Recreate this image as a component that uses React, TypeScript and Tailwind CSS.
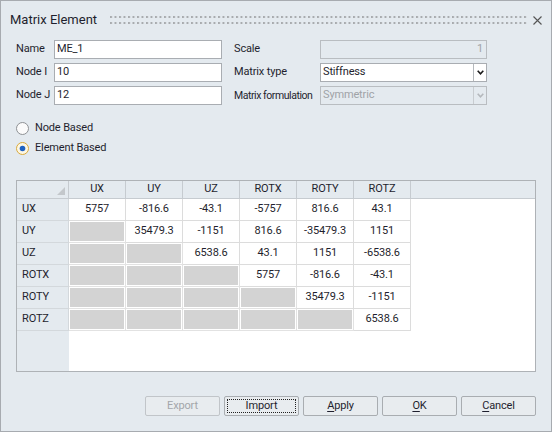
import React from "react";

type Cell = string | null;

const cols = ["UX", "UY", "UZ", "ROTX", "ROTY", "ROTZ"];

const rows: { name: string; cells: Cell[] }[] = [
  { name: "UX", cells: ["5757", "-816.6", "-43.1", "-5757", "816.6", "43.1"] },
  { name: "UY", cells: [null, "35479.3", "-1151", "816.6", "-35479.3", "1151"] },
  { name: "UZ", cells: [null, null, "6538.6", "43.1", "1151", "-6538.6"] },
  { name: "ROTX", cells: [null, null, null, "5757", "-816.6", "-43.1"] },
  { name: "ROTY", cells: [null, null, null, null, "35479.3", "-1151"] },
  { name: "ROTZ", cells: [null, null, null, null, null, "6538.6"] },
];

function Chevron({ disabled }: { disabled?: boolean }) {
  return (
    <svg width="7" height="5" viewBox="0 0 7 5">
      <path
        d="M0.7 0.8 L3.5 3.8 L6.3 0.8"
        fill="none"
        stroke={disabled ? "#b4b8bc" : "#1a1a1a"}
        strokeWidth="1.6"
      />
    </svg>
  );
}

function Radio({ checked, label }: { checked?: boolean; label: string }) {
  return (
    <div className="flex items-center h-[20px] gap-[6px]">
      <svg width="13" height="13" viewBox="0 0 13 13">
        {checked ? (
          <>
            <circle cx="6.5" cy="6.5" r="6" fill="#fdf7e4" stroke="#d8a93c" />
            <circle cx="6.5" cy="6.5" r="2.8" fill="#1f62c2" />
          </>
        ) : (
          <circle cx="6.5" cy="6.5" r="6" fill="#fbfbfb" stroke="#8e9194" />
        )}
      </svg>
      <span>{label}</span>
    </div>
  );
}

function Button({
  children,
  disabled,
  focused,
}: {
  children: React.ReactNode;
  disabled?: boolean;
  focused?: boolean;
}) {
  return (
    <button
      className={`relative w-[75px] h-[20px] rounded-[2px] border bg-[#e8ecef] flex items-center justify-center ${
        disabled ? "border-[#c1c5c9] text-[#a3a6aa]" : "border-[#a9adb1] text-[#1f1f2e]"
      }`}
    >
      {focused && (
        <span className="absolute inset-[2px] border border-dotted border-[#222]" />
      )}
      {children}
    </button>
  );
}

export default function App() {
  return (
    <div className="w-[552px] h-[432px] bg-[#e4eaef] border border-[#a7abb0] font-['Segoe_UI',Roboto,sans-serif] text-[11px] tracking-[-0.15px] text-[#1f1f2e] flex flex-col">
      {/* title bar */}
      <div className="h-[38px] flex items-center pl-[9px] pr-[9px]">
        <span className="text-[13px] tracking-normal">Matrix Element</span>
        <svg className="flex-1 h-[9px] ml-[13px] mr-[6px]">
          <defs>
            <pattern id="dots" width="4.5" height="9" patternUnits="userSpaceOnUse">
              <rect x="0" y="0" width="2" height="2" fill="#a8abae" />
              <rect x="0" y="6" width="2" height="2" fill="#a8abae" />
            </pattern>
          </defs>
          <rect width="100%" height="9" fill="url(#dots)" />
        </svg>
        <svg width="9" height="9" viewBox="0 0 9 9">
          <path d="M0.5 0.5 L8.5 8.5 M8.5 0.5 L0.5 8.5" stroke="#555" strokeWidth="1.1" />
        </svg>
      </div>

      {/* fields */}
      <div className="flex pl-[15px] mt-[1px]">
        <div className="flex flex-col gap-[4px]">
          {[
            ["Name", "ME_1"],
            ["Node I", "10"],
            ["Node J", "12"],
          ].map(([label, value]) => (
            <div key={label} className="flex items-center h-[19px]">
              <span className="w-[38px] whitespace-nowrap">{label}</span>
              <div className="w-[168px] h-full bg-white border border-[#a9adb2] px-[2px] flex items-center">
                {value}
              </div>
            </div>
          ))}
        </div>
        <div className="flex flex-col gap-[4px] ml-[12px]">
          <div className="flex items-center h-[19px]">
            <span className="w-[86px] whitespace-nowrap">Scale</span>
            <div className="w-[167px] h-full border border-[#b9bdc1] px-[3px] flex items-center justify-end text-[#a0a3a7]">
              1
            </div>
          </div>
          <div className="flex items-center h-[19px]">
            <span className="w-[86px] whitespace-nowrap">Matrix type</span>
            <div className="w-[167px] h-full bg-white border border-[#a9adb2] flex items-center">
              <span className="flex-1 px-[2px]">Stiffness</span>
              <div className="w-[13px] h-full border-l border-[#b5b9bd] flex items-center justify-center">
                <Chevron />
              </div>
            </div>
          </div>
          <div className="flex items-center h-[19px]">
            <span className="w-[86px] whitespace-nowrap text-[10.5px] tracking-[-0.45px]">
              Matrix formulation
            </span>
            <div className="w-[167px] h-full border border-[#b9bdc1] flex items-center text-[#a0a3a7]">
              <span className="flex-1 px-[2px]">Symmetric</span>
              <div className="w-[13px] h-full border-l border-[#c8ccd0] flex items-center justify-center">
                <Chevron disabled />
              </div>
            </div>
          </div>
        </div>
      </div>

      {/* radios */}
      <div className="flex flex-col pl-[15px] mt-[13px]">
        <Radio label="Node Based" />
        <Radio label="Element Based" checked />
      </div>

      {/* matrix table */}
      <div className="ml-[15px] mt-[22px] w-[520px] h-[192px] border border-[#aeb2b6] bg-white flex flex-col">
        <div className="flex h-[18px] bg-[#e4eaef] border-b border-[#c6cbd0]">
          <div className="w-[52px] border-r border-[#c6cbd0] relative">
            <svg className="absolute right-[3px] bottom-[3px]" width="8" height="8" viewBox="0 0 8 8">
              <polygon points="8,0 8,8 0,8" fill="#c3c7cb" />
            </svg>
          </div>
          {cols.map((c) => (
            <div key={c} className="w-[57px] border-r border-[#c6cbd0] flex items-center justify-center">
              {c}
            </div>
          ))}
          <div className="flex-1" />
        </div>
        {rows.map((r) => (
          <div key={r.name} className="flex h-[22px]">
            <div className="w-[52px] bg-[#e4eaef] border-r border-b border-[#d3d8dc] flex items-center pl-[5px]">
              {r.name}
            </div>
            {r.cells.map((v, i) =>
              v === null ? (
                <div key={i} className="w-[57px] border-r border-b border-[#e2e2e2] p-[1px]">
                  <div className="w-full h-full bg-[#d3d3d3]" />
                </div>
              ) : (
                <div
                  key={i}
                  className="w-[57px] border-r border-b border-[#dcdcdc] flex items-center justify-center"
                >
                  {v}
                </div>
              )
            )}
          </div>
        ))}
        <div className="flex-1 flex">
          <div className="w-[52px] bg-[#e4eaef]" />
        </div>
      </div>

      {/* buttons */}
      <div className="flex justify-end gap-[4px] pr-[15px] mt-[24px]">
        <Button disabled>Export</Button>
        <Button focused>Import</Button>
        <Button>
          <span>
            <span className="underline underline-offset-2">A</span>pply
          </span>
        </Button>
        <Button>
          <span>
            <span className="underline underline-offset-2">O</span>K
          </span>
        </Button>
        <Button>
          <span>
            <span className="underline underline-offset-2">C</span>ancel
          </span>
        </Button>
      </div>
    </div>
  );
}
